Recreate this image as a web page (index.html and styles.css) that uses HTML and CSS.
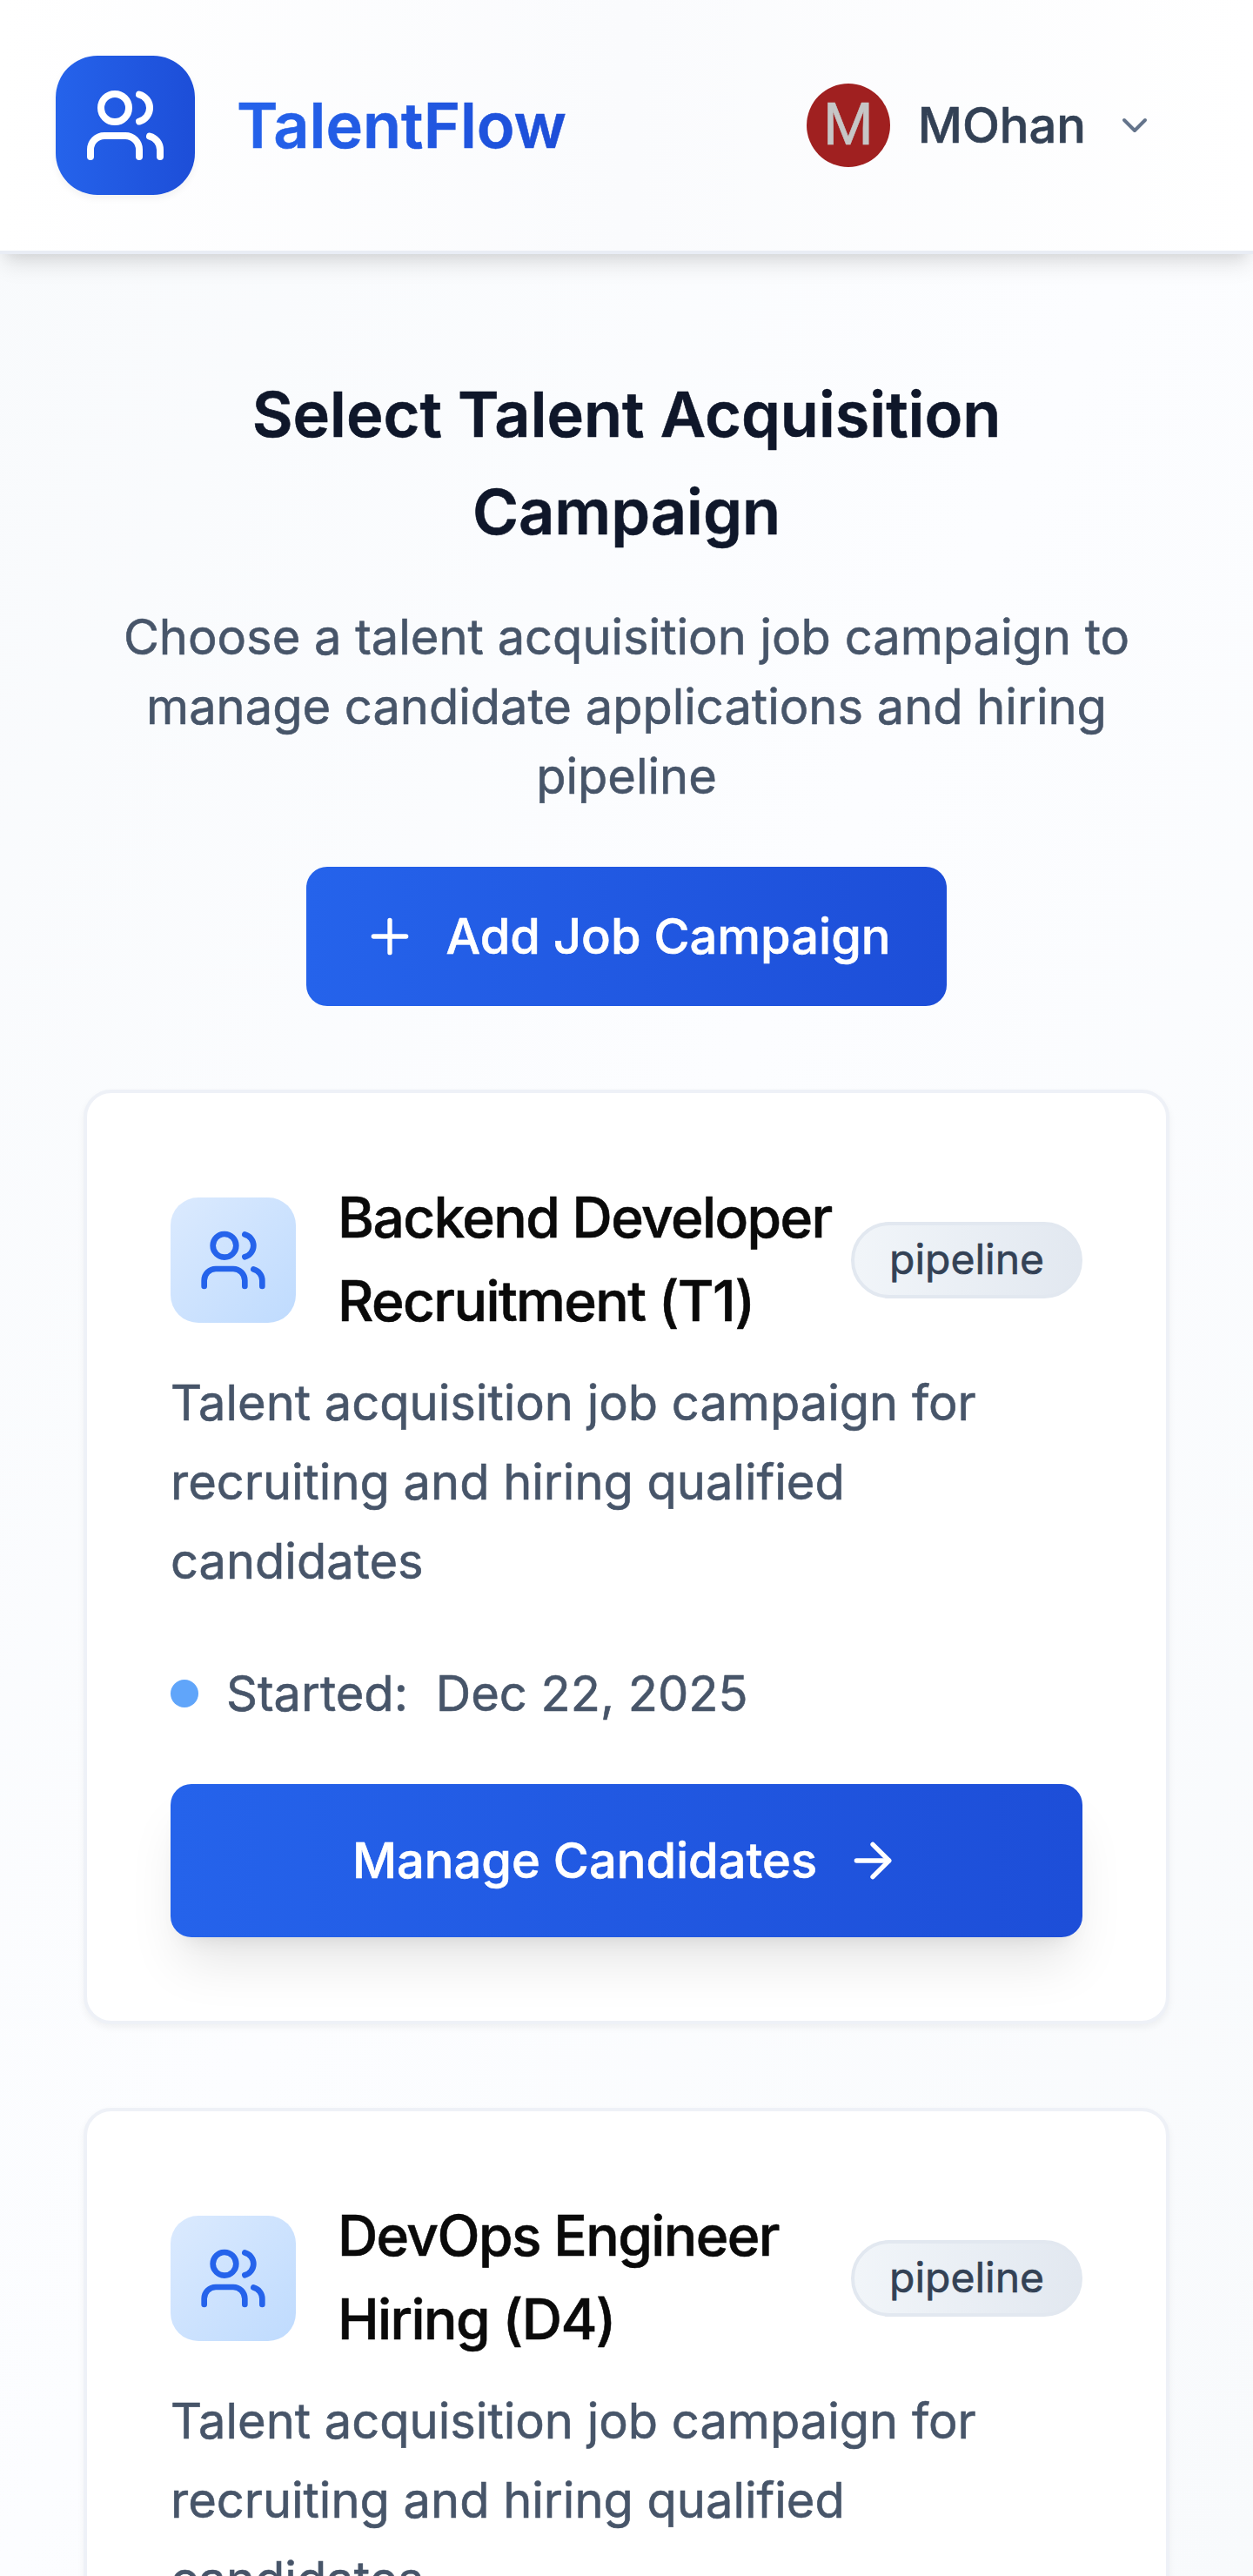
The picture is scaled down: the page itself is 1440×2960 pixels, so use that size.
FILE: index.html
```html
<!DOCTYPE html>
<html lang="en">
<head>
    <meta charset="UTF-8">
    <meta name="viewport" content="width=device-width, initial-scale=1.0">
    <title>TalentFlow</title>
    <link rel="stylesheet" href="styles.css">
</head>
<body>
    <svg class="sprite" width="0" height="0">
        <symbol id="users" viewBox="0 0 24 24">
            <path d="M16 21v-2a4 4 0 0 0-4-4H6a4 4 0 0 0-4 4v2"/>
            <circle cx="9" cy="7" r="4"/>
            <path d="M22 21v-2a4 4 0 0 0-3-3.87"/>
            <path d="M16 3.13a4 4 0 0 1 0 7.75"/>
        </symbol>
    </svg>

    <header class="header">
        <div class="brand">
            <div class="logo">
                <svg class="icon"><use href="#users"/></svg>
            </div>
            <span class="brand-name">TalentFlow</span>
        </div>
        <button class="user">
            <span class="avatar">M</span>
            <span>MOhan</span>
            <svg class="icon chevron" viewBox="0 0 24 24"><path d="m6 9 6 6 6-6"/></svg>
        </button>
    </header>

    <main class="main">
        <div class="intro">
            <h1>Select Talent Acquisition Campaign</h1>
            <p>Choose a talent acquisition job campaign to manage candidate applications and hiring pipeline</p>
            <button class="btn btn-add">
                <svg class="icon" viewBox="0 0 24 24"><path d="M5 12h14M12 5v14"/></svg>
                Add Job Campaign
            </button>
        </div>

        <div class="card">
            <div class="card-header">
                <div class="card-icon">
                    <svg class="icon"><use href="#users"/></svg>
                </div>
                <h2>Backend Developer Recruitment (T1)</h2>
                <span class="badge">pipeline</span>
            </div>
            <p class="description">Talent acquisition job campaign for recruiting and hiring qualified candidates</p>
            <div class="started">
                <span class="dot"></span>
                <span>Started:</span>
                <span>Dec 22, 2025</span>
            </div>
            <button class="btn btn-manage">
                Manage Candidates
                <svg class="icon" viewBox="0 0 24 24"><path d="M5 12h14"/><path d="m12 5 7 7-7 7"/></svg>
            </button>
        </div>

        <!-- runs past the bottom of the screen -->
        <div class="card">
            <div class="card-header">
                <div class="card-icon">
                    <svg class="icon"><use href="#users"/></svg>
                </div>
                <h2>DevOps Engineer Hiring (D4)</h2>
                <span class="badge">pipeline</span>
            </div>
            <p class="description">Talent acquisition job campaign for recruiting and hiring qualified candidates</p>
        </div>
    </main>
</body>
</html>
```

FILE: styles.css
```css
* {
    box-sizing: border-box;
    margin: 0;
    padding: 0;
}

html {
    height: 100%;
    overflow: hidden;
}

body {
    height: 100%;
    overflow: hidden;
    font-family: Inter, sans-serif;
    font-size: 56px;
    line-height: 80px;
    color: #0a0a0a;
    -webkit-text-stroke: 0.6px;
    background: linear-gradient(to bottom right, #f8fafc, #fcfdff 50%, #f8fafc);
}

button {
    font: inherit;
    border: none;
    background: none;
}

.sprite {
    position: absolute;
}

.icon {
    flex-shrink: 0;
    width: 64px;
    height: 64px;
    fill: none;
    stroke: currentColor;
    stroke-width: 2;
    stroke-linecap: round;
    stroke-linejoin: round;
}

/* Header */
.header {
    display: flex;
    justify-content: space-between;
    align-items: center;
    height: 292px;
    padding: 0 64px;
    border-bottom: 4px solid #e9edf5;
    background: linear-gradient(to right, #ffffff, #fafbfd 50%, #ffffff);
    box-shadow: 0 16px 24px -4px rgba(0, 0, 0, 0.1), 0 8px 16px -8px rgba(0, 0, 0, 0.1);
}

.brand {
    display: flex;
    align-items: center;
    gap: 48px;
}

.logo {
    display: flex;
    align-items: center;
    justify-content: center;
    width: 160px;
    height: 160px;
    border-radius: 48px;
    color: #fff;
    background: linear-gradient(to right, #2563eb, #1d4ed8);
    box-shadow: 0 4px 8px rgba(0, 0, 0, 0.05);
}

.logo .icon {
    width: 96px;
    height: 96px;
}

.brand-name {
    font-size: 72px;
    line-height: 112px;
    font-weight: 600;
    color: transparent;
    background: linear-gradient(to right, #2563eb, #1d4ed8);
    -webkit-background-clip: text;
    background-clip: text;
}

.user {
    display: flex;
    align-items: center;
    gap: 32px;
    padding-right: 48px;
    font-weight: 500;
    color: #334155;
}

.avatar {
    width: 96px;
    height: 96px;
    border-radius: 50%;
    font-family: Roboto, sans-serif;
    font-size: 66px;
    font-weight: 400;
    line-height: 96px;
    text-align: center;
    color: #c6c6c6;
    background: #a02020;
}

.chevron {
    width: 48px;
    height: 48px;
    color: #64748b;
}

/* Page content */
.main {
    padding: 128px 96px;
}

.intro {
    text-align: center;
    padding: 0 32px;
    margin-bottom: 96px;
}

h1 {
    font-size: 72px;
    line-height: 112px;
    font-weight: 600;
    color: #0f172a;
    margin-bottom: 48px;
}

.intro p {
    color: #475569;
    margin-bottom: 64px;
}

.btn {
    display: inline-flex;
    align-items: center;
    justify-content: center;
    gap: 32px;
    border-radius: 24px;
    font-weight: 500;
    color: #fff;
    background: linear-gradient(to right, #2563eb, #1d4ed8);
}

.btn-add {
    height: 160px;
    padding: 0 64px;
    vertical-align: top;
}

/* Campaign cards */
.card {
    padding: 96px;
    margin-bottom: 96px;
    border: 4px solid #eef1f7;
    border-radius: 32px;
    background: #fff;
    box-shadow: 0 4px 8px rgba(0, 0, 0, 0.05);
}

.card-header {
    display: flex;
    align-items: center;
    margin-bottom: 23px;
}

.card-icon {
    flex-shrink: 0;
    height: 144px;
    padding: 32px;
    margin-right: 48px;
    border-radius: 32px;
    color: #2563eb;
    background: linear-gradient(to bottom right, #dbeafe, #bfdbfe);
}

.card-icon .icon {
    display: block;
    width: 80px;
    height: 80px;
}

h2 {
    flex: 1;
    margin: -1px 0 1px;
    font-size: 64px;
    line-height: 96px;
    font-weight: 500;
    letter-spacing: -0.025em;
}

.badge {
    padding: 7px 40px 9px;
    border: 4px solid #e2e8f0;
    border-radius: 44px;
    font-size: 48px;
    line-height: 64px;
    color: #334155;
    background: linear-gradient(to right, #f1f5f9, #e2e8f0);
}

.description {
    line-height: 91px;
    color: #475569;
    margin-bottom: 66px;
}

.started {
    display: flex;
    align-items: center;
    gap: 32px;
    color: #475569;
    margin-bottom: 64px;
}

.dot {
    width: 32px;
    height: 32px;
    border-radius: 50%;
    background: #60a5fa;
}

.btn-manage {
    display: flex;
    width: 100%;
    height: 176px;
    box-shadow: 0 40px 60px -12px rgba(0, 0, 0, 0.1), 0 16px 24px -16px rgba(0, 0, 0, 0.1);
}
```
